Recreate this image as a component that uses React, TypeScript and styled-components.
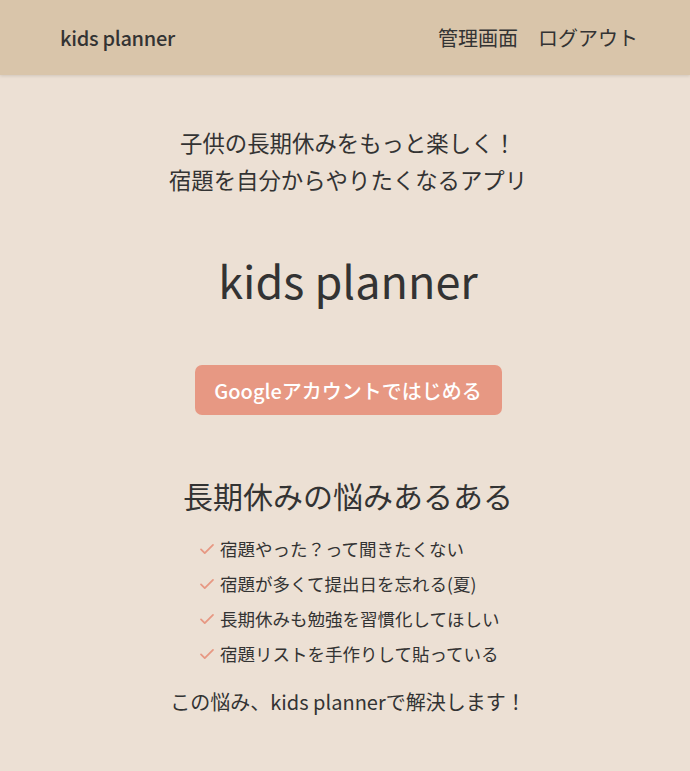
import React from "react";
import styled, { createGlobalStyle } from "styled-components";

const Global = createGlobalStyle`
  html, body { margin: 0; padding: 0; background: #ece0d4; }
  body { font-family: "Noto Sans CJK JP", "Noto Sans", sans-serif; color: #333; }
  * { box-sizing: border-box; }
`;

const Header = styled.header`
  height: 75px;
  background: #d9c5aa;
  display: flex;
  align-items: center;
  justify-content: space-between;
  padding: 0 52px 0 60px;
  box-shadow: 0 1px 3px rgba(0,0,0,0.12);
`;

const Brand = styled.div`
  font-size: 20px;
  font-weight: 500;
  color: #333;
  letter-spacing: -0.3px;
`;

const Nav = styled.nav`
  display: flex;
  gap: 20px;
  font-size: 20px;
  color: #333;
`;

const Main = styled.main`
  display: flex;
  flex-direction: column;
  align-items: center;
  padding: 49px 0 0 6px;
`;

const Lead = styled.p`
  margin: 0;
  font-size: 22.4px;
  line-height: 36.5px;
  text-align: center;
  color: #333;
`;

const Title = styled.h1`
  margin: 53px 0 0;
  font-size: 45px;
  font-weight: 400;
  line-height: 60px;
  color: #333;
`;

const GoogleButton = styled.button`
  margin-top: 55px;
  width: 307px;
  height: 50px;
  border: none;
  border-radius: 7px;
  background: #e79883;
  color: #fff;
  font-family: inherit;
  font-size: 20px;
  font-weight: 500;
`;

const SectionTitle = styled.h2`
  margin: 60px 0 0;
  font-size: 30px;
  font-weight: 400;
  line-height: 40px;
  color: #333;
`;

const List = styled.ul`
  list-style: none;
  margin: 16px 0 0 192px;
  padding: 0;
  display: flex;
  flex-direction: column;
  align-self: flex-start;
`;

const Item = styled.li`
  display: flex;
  align-items: center;
  gap: 4px;
  height: 35px;
  font-size: 17.5px;
  color: #333;
`;

const Closing = styled.p`
  margin: 16px 0 0;
  font-size: 20px;
  line-height: 30px;
  color: #333;
`;

const Check = () => (
  <svg width="18" height="18" viewBox="0 0 24 24" fill="none" stroke="#e79883" strokeWidth="2.4" strokeLinecap="round" strokeLinejoin="round">
    <path d="M4 12.5l5 5L20 6.5" />
  </svg>
);

const worries = [
  "宿題やった？って聞きたくない",
  "宿題が多くて提出日を忘れる(夏)",
  "長期休みも勉強を習慣化してほしい",
  "宿題リストを手作りして貼っている",
];

export default function App() {
  return (
    <>
      <Global />
      <Header>
        <Brand>kids planner</Brand>
        <Nav>
          <span>管理画面</span>
          <span>ログアウト</span>
        </Nav>
      </Header>
      <Main>
        <Lead>
          子供の長期休みをもっと楽しく！
          <br />
          宿題を自分からやりたくなるアプリ
        </Lead>
        <Title>kids planner</Title>
        <GoogleButton>Googleアカウントではじめる</GoogleButton>
        <SectionTitle>長期休みの悩みあるある</SectionTitle>
        <List>
          {worries.map((w) => (
            <Item key={w}>
              <Check />
              {w}
            </Item>
          ))}
        </List>
        <Closing>この悩み、kids plannerで解決します！</Closing>
      </Main>
    </>
  );
}
